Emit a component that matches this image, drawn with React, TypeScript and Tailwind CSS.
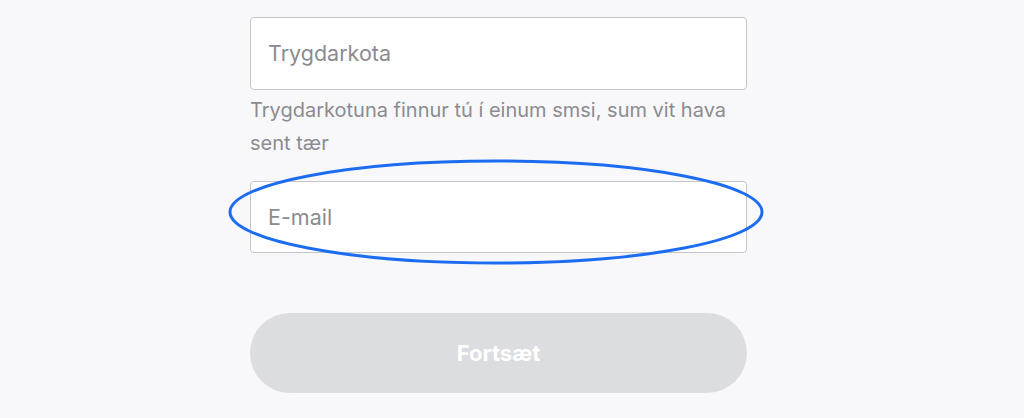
export default function App() {
  return (
    <div className="flex h-[418px] w-full bg-[#f8f8fa] pl-[250px] pt-[17px] font-['Inter',sans-serif]">
      <div className="flex w-[497px] flex-col">
        <div className="flex h-[73px] items-center rounded-[4px] border border-[#c6c6ca] bg-white px-[17px]">
          <span className="text-[21.5px] text-[#8b8b91]">Trygdarkota</span>
        </div>
        <p className="mt-[4px] text-[20px] leading-[33px] text-[#8b8b91]">
          Trygdarkotuna finnur tú í einum smsi, sum vit hava sent tær
        </p>
        <div className="relative mt-[21px]">
          <div className="flex h-[72px] items-center rounded-[4px] border border-[#c6c6ca] bg-white px-[17px]">
            <span className="text-[21.5px] text-[#8b8b91]">E-mail</span>
          </div>
          <svg
            className="pointer-events-none absolute left-[-23px] top-[-22px]"
            width="540"
            height="108"
            viewBox="0 0 540 108"
          >
            <ellipse cx="269" cy="53" rx="266" ry="51" fill="none" stroke="#1c6cf2" strokeWidth="3" />
          </svg>
        </div>
        <button className="mt-[60px] flex h-[80px] items-center justify-center rounded-full bg-[#dcdde0] text-[22px] font-bold text-white">
          Fortsæt
        </button>
      </div>
    </div>
  )
}
